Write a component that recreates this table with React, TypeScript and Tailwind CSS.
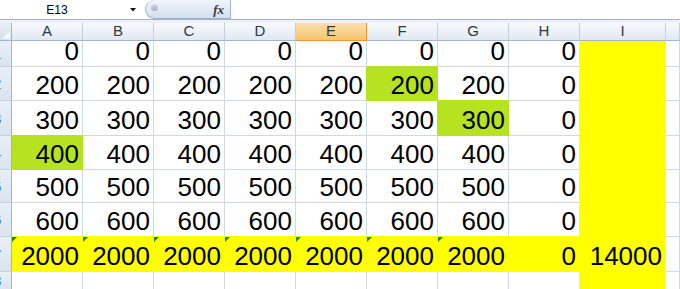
import React from "react";

type Fill = "y" | "g" | "n";

const COLS = ["A", "B", "C", "D", "E", "F", "G", "H", "I", "J"];

const BG: Record<Fill, string> = {
  y: "bg-[#ffff00]",
  g: "bg-[#b5e31f]",
  n: "bg-white",
};
const BR: Record<Fill, string> = {
  y: "border-r-[#ffff00]",
  g: "border-r-[#b5e31f]",
  n: "border-r-[#d0d7e5]",
};
const BB: Record<Fill, string> = {
  y: "border-b-[#ffff00]",
  g: "border-b-[#b5e31f]",
  n: "border-b-[#d0d7e5]",
};

const ROW_H = ["h-[26px]", "h-[34px]", "h-[35px]", "h-[34px]", "h-[33px]", "h-[34px]", "h-[35px]", "h-[18px]"];

const rowValues = (r: number): string[] => {
  if (r === 0) return ["0", "0", "0", "0", "0", "0", "0", "0", "", ""];
  if (r >= 1 && r <= 5) {
    const v = String((r + 1) * 100);
    return [v, v, v, v, v, v, v, "0", "", ""];
  }
  if (r === 6) return ["2000", "2000", "2000", "2000", "2000", "2000", "2000", "0", "14000", ""];
  return ["", "", "", "", "", "", "", "", "", ""];
};

const fillOf = (r: number, c: number): Fill => {
  if (r < 0 || r > 7 || c > 9) return "n";
  if (c === 8) return "y";
  if (r === 6 && c <= 8) return "y";
  if (r === 1 && c === 5) return "g";
  if (r === 2 && c === 6) return "g";
  if (r === 3 && c === 0) return "g";
  return "n";
};

const pick = (own: Fill, other: Fill): Fill => (own !== "n" ? own : other);

export default function App() {
  return (
    <div className="w-[680px] h-[289px] overflow-hidden bg-white font-['Liberation_Sans',Arial,sans-serif] select-none">
      {/* formula bar */}
      <div className="flex h-[20px] border-b border-b-[#a3b2c6] bg-white">
        <div className="w-[114px] flex items-center justify-center text-[12px] text-black">E13</div>
        <div className="w-[31px] flex items-center justify-center pl-[7px]">
          <svg width="6" height="4" viewBox="0 0 6 4">
            <path d="M0 0H6L3 3.5Z" fill="#111" />
          </svg>
        </div>
        <div className="w-[86px] h-[19px] flex items-center justify-between rounded-l-full border border-t-0 border-[#9fb1c9] bg-gradient-to-b from-[#f1f5fb] to-[#d3dfee] pl-[5px] pr-[6px]">
          <span className="w-[7px] h-[7px] rounded-full bg-gradient-to-b from-[#d6dbe2] to-[#a7b0bc] mb-[4px]" />
          <span className="font-['Liberation_Serif',serif] italic font-bold text-[13px] text-[#3a3a3a] leading-none">
            fx
          </span>
        </div>
        <div className="flex-1" />
      </div>
      <div className="h-[3px] bg-[#eef2f7]" />

      {/* sheet */}
      <div className="grid grid-cols-[12px_71px_71px_71px_71px_71px_71px_71px_71px_86px_1fr]">
        {/* header row */}
        <div className="relative h-[18px] border-r border-b border-[#9eb6ce] bg-gradient-to-b from-[#e6edf6] to-[#d5e0ed]">
          <svg className="absolute right-[1px] bottom-[1px]" width="8" height="8" viewBox="0 0 8 8">
            <path d="M8 0V8H0Z" fill="#f4f7fb" />
          </svg>
        </div>
        {COLS.map((c) =>
          c === "E" ? (
            <div
              key={c}
              className="h-[18px] flex items-center justify-center border-r border-b border-[#f29436] bg-gradient-to-b from-[#fbe0ae] to-[#f4c46c] text-[15px] text-[#2b3a4a]"
            >
              {c}
            </div>
          ) : (
            <div
              key={c}
              className="h-[18px] flex items-center justify-center border-r border-r-[#c2cfde] border-b border-b-[#9eb6ce] bg-gradient-to-b from-[#f8fafd] to-[#e1e8f1] text-[15px] text-[#2b3a4a]"
            >
              {c === "J" ? "" : c}
            </div>
          )
        )}

        {/* body rows */}
        {ROW_H.map((h, r) => {
          const vals = rowValues(r);
          return (
            <React.Fragment key={r}>
              <div
                className={`${h} overflow-hidden flex items-center border-r border-r-[#9eb6ce] border-b border-b-[#c5d2e0] bg-gradient-to-b from-[#e9eff7] to-[#dbe4ef] text-[15px] text-[#3d6a96]`}
              >
                <span className="ml-[-7px] leading-none">{r + 1}</span>
              </div>
              {COLS.map((_, c) => {
                const f = fillOf(r, c);
                const right = pick(f, fillOf(r, c + 1));
                const below = pick(f, fillOf(r + 1, c));
                return (
                  <div
                    key={c}
                    className={`relative ${h} flex items-end justify-end pr-[3px] pb-[2px] border-r border-b ${BR[right]} ${BB[below]} ${BG[f]} text-[26px] leading-none text-black`}
                  >
                    {r === 6 && c < 7 && (
                      <span className="absolute top-0 left-0 w-0 h-0 border-t-[5px] border-t-[#1f8a1f] border-r-[5px] border-r-transparent" />
                    )}
                    {vals[c]}
                  </div>
                );
              })}
            </React.Fragment>
          );
        })}
      </div>
    </div>
  );
}
